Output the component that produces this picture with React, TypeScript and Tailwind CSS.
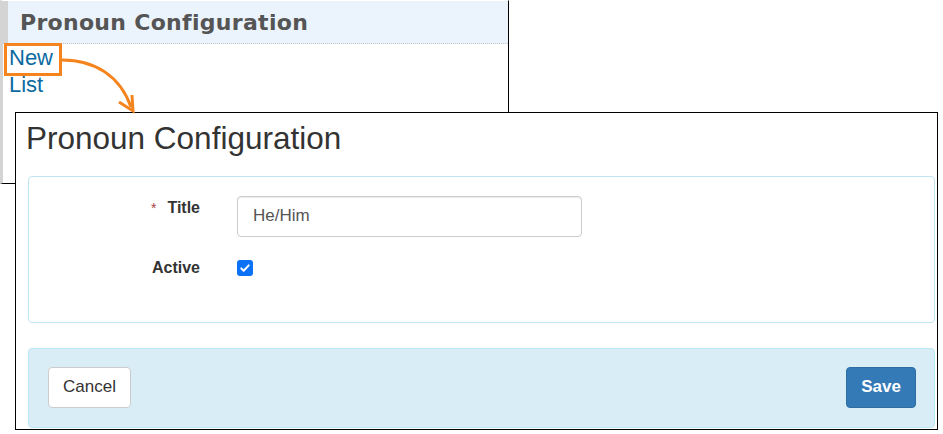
function ListWindow() {
  return (
    <div className="absolute left-0 top-0 flex h-[184px] w-[509px] flex-col border-y border-r border-l-[3px] border-black border-t-white border-l-[#d4d4d4] bg-white">
      <div className="h-[43px] border-b border-l-[5px] border-b-[#c8c8c8] border-l-[#d4d4d4] bg-[#ebf3fd] pl-[12px] pt-[11px] [border-bottom-style:dotted]">
        <h2 className="font-['DejaVu_Sans',Verdana,sans-serif] text-[22px] font-bold leading-none tracking-[0.3px] text-[#555]">
          Pronoun Configuration
        </h2>
      </div>
      <div className="flex flex-col pl-[6px] text-[22px] leading-[27px] text-[#0b6aa2]">
        <a>New</a>
        <a>List</a>
      </div>
    </div>
  );
}

function CheckMark() {
  return (
    <span className="flex h-4 w-4 items-center justify-center rounded-[3px] bg-[#0b72f6]">
      <svg viewBox="0 0 16 16" className="h-[12px] w-[12px]" fill="none">
        <path d="M3 8.5l3.2 3.2L13 4.5" stroke="white" strokeWidth="2.6" strokeLinecap="round" strokeLinejoin="round" />
      </svg>
    </span>
  );
}

function FormWindow() {
  return (
    <div className="absolute left-[15px] top-[112px] h-[318px] w-[923px] overflow-hidden border border-black bg-white">
      <h1 className="mt-[10px] pl-[10px] text-[31.5px] leading-none text-[#333]">Pronoun Configuration</h1>

      <div className="ml-[12px] mt-[21px] w-[907px] rounded-[4px] border border-[#bfe6f2] pb-[46px] pt-[19px]">
        <div className="flex items-start">
          <label className="mt-[4px] w-[171px] text-right text-[16px] font-bold leading-4 text-[#333]">
            <span className="mr-[11px] align-top text-[14px] font-normal text-[#a94442]">*</span>
            Title
          </label>
          <input
            readOnly
            value="He/Him"
            className="ml-[37px] h-[41px] w-[345px] rounded-[4px] border border-[#ccc] pl-[15px] text-[17px] text-[#555] shadow-[inset_0_1px_1px_rgba(0,0,0,0.075)] outline-none"
          />
        </div>
        <div className="mt-[23px] flex items-start">
          <label className="w-[171px] text-right text-[16px] font-bold leading-4 text-[#333]">Active</label>
          <div className="ml-[37px]">
            <CheckMark />
          </div>
        </div>
      </div>

      <div className="ml-[12px] mt-[25px] flex w-[907px] items-start justify-between rounded-[4px] border border-[#bce8f1] bg-[#d9edf7] pb-[19px] pl-[19px] pr-[18px] pt-[18px]">
        <button className="h-[41px] w-[83px] rounded-[4px] border border-[#ccc] bg-white text-[17px] text-[#333]">
          Cancel
        </button>
        <button className="h-[41px] w-[70px] rounded-[4px] border border-[#2e6da4] bg-[#337ab7] text-[17px] font-bold text-white">
          Save
        </button>
      </div>
    </div>
  );
}

function Callout() {
  return (
    <>
      <div className="absolute left-[4px] top-[43px] h-[33px] w-[58px] border-[3px] border-[#f5841f]" />
      <svg className="pointer-events-none absolute left-0 top-0 h-[120px] w-[160px]" viewBox="0 0 160 120" fill="none">
        <path d="M62 60 C 95 60, 120 76, 131 107" stroke="#f5841f" strokeWidth="3" />
        <path d="M119 102 L133 111 L132 95" stroke="#f5841f" strokeWidth="3" strokeLinejoin="miter" />
      </svg>
    </>
  );
}

export default function App() {
  return (
    <div className="relative h-[434px] w-[943px] overflow-hidden bg-white font-['Liberation_Sans',Arial,sans-serif]">
      <ListWindow />
      <FormWindow />
      <Callout />
    </div>
  );
}
